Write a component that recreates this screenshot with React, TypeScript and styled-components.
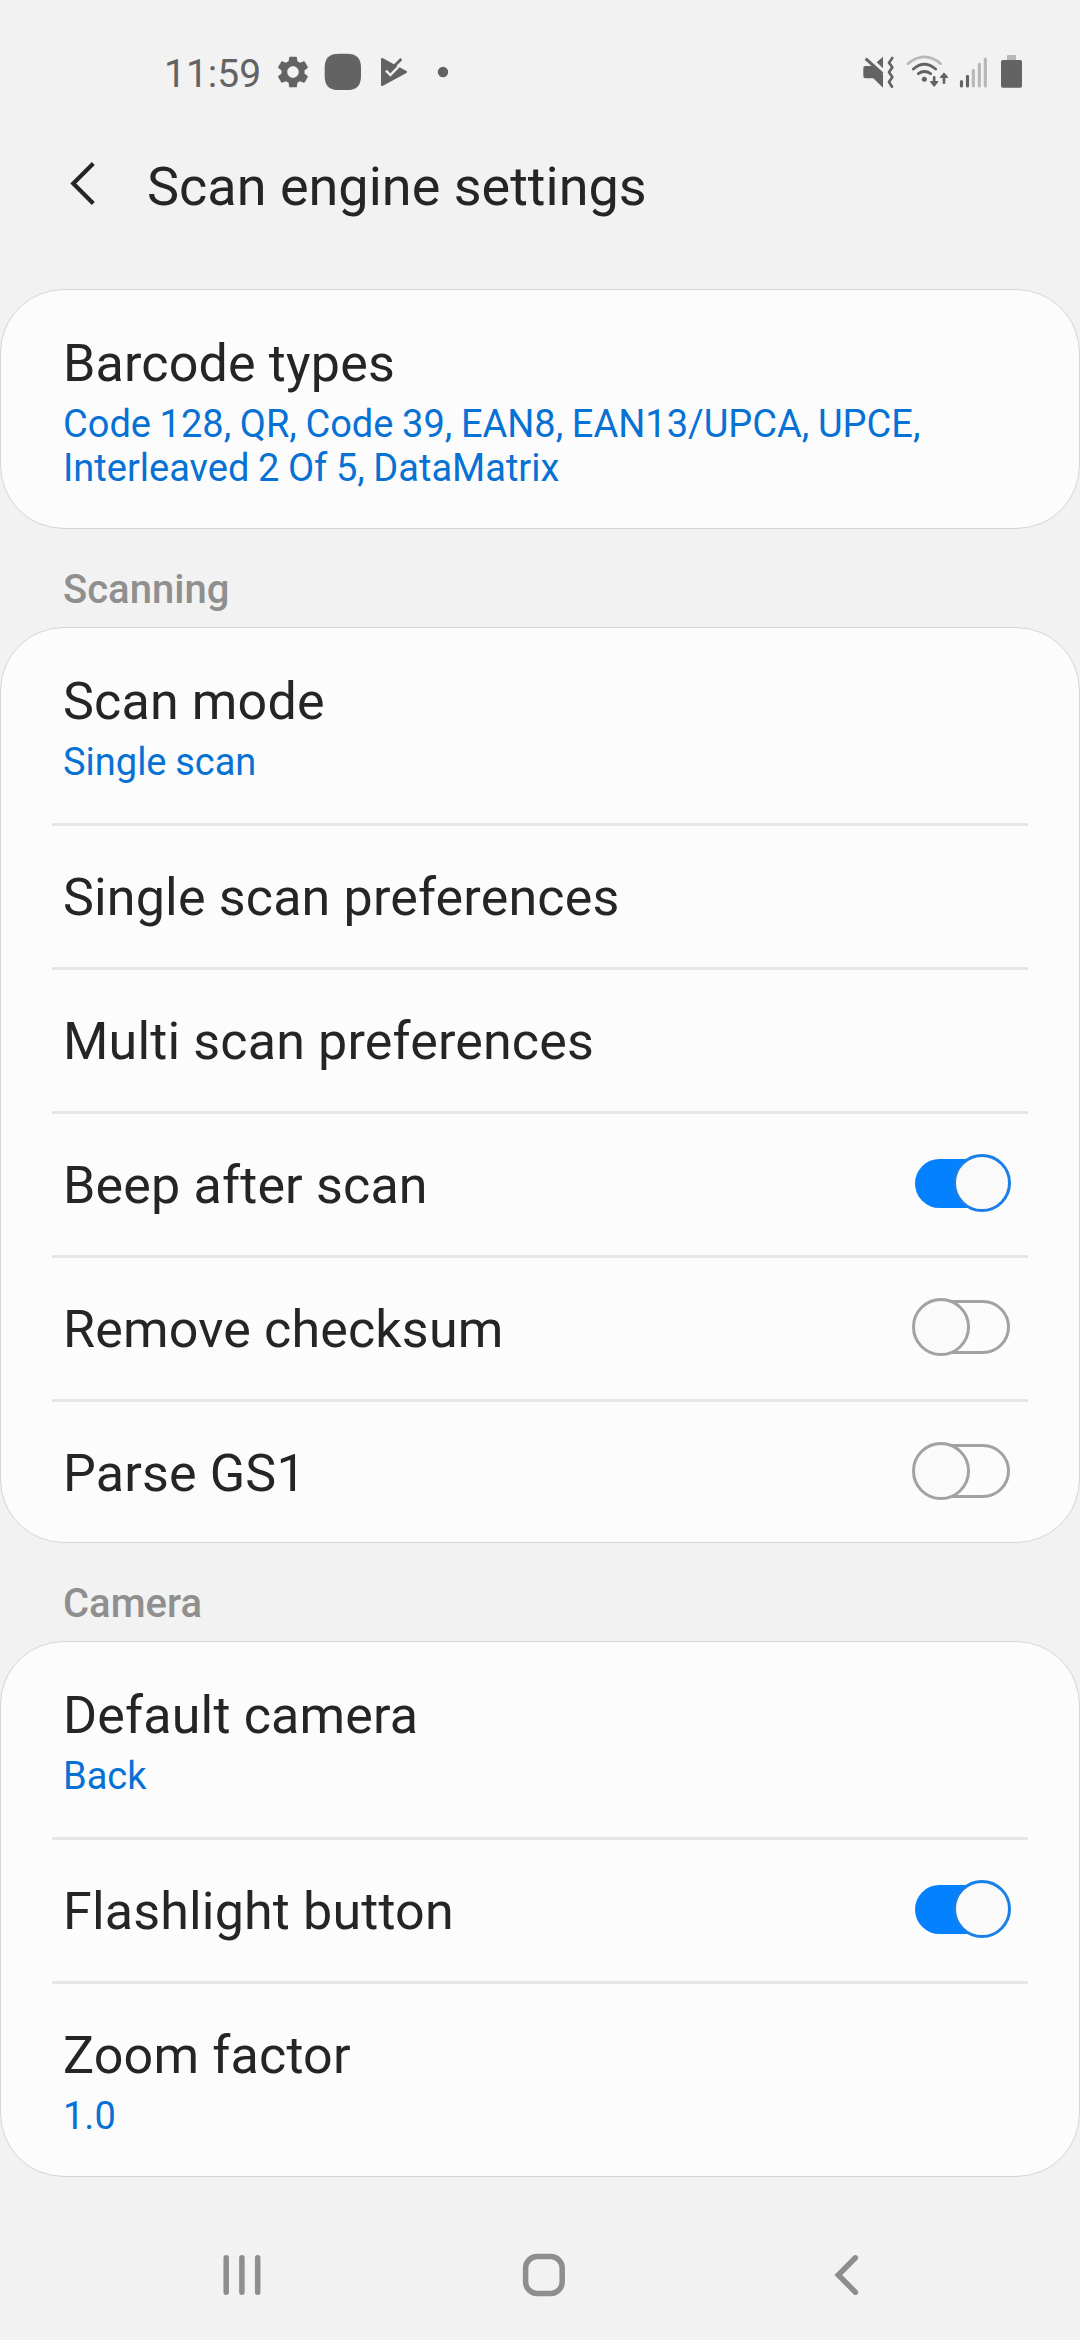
import React from "react";
import styled, { createGlobalStyle } from "styled-components";

const BACKGROUND = "#f2f2f2";
const DARK = "#636363";
const FAINT = "#b8b8b8";

const GlobalStyle = createGlobalStyle`
  * { box-sizing: border-box; }
  body {
    margin: 0;
    background: ${BACKGROUND};
    font-family: Roboto, "Noto Sans", sans-serif;
  }
`;

const Screen = styled.div`
  display: flex;
  flex-direction: column;
  width: 1080px;
  height: 2340px;
  background: ${BACKGROUND};
  overflow: hidden;
`;

const StatusBar = styled.header`
  display: flex;
  justify-content: space-between;
  align-items: center;
  height: 144px;
  padding: 0 55px 0 164px;
`;

const StatusGroup = styled.div`
  display: flex;
  align-items: center;
`;

const Clock = styled.span`
  width: 107px;
  padding-top: 4px;
  font-size: 39px;
  line-height: 46px;
  color: ${DARK};
`;

const AppBar = styled.div`
  display: flex;
  align-items: flex-start;
  height: 145px;
  padding: 11px 0 0 64px;
`;

const BackIcon = styled.svg`
  width: 40px;
  height: 56px;
  flex: none;
`;

const Title = styled.h1`
  margin: 0 0 0 43px;
  font-size: 54px;
  font-weight: 400;
  line-height: 64px;
  color: #252525;
`;

const Card = styled.section`
  padding-top: 2px;
  border: 1px solid #d5d5d5;
  border-radius: 64px;
  background: #fcfcfc;
`;

const SectionHeader = styled.h2`
  height: 98px;
  margin: 0;
  padding: 37px 63px 0;
  font-size: 40px;
  font-weight: 500;
  line-height: 47px;
  color: #8f8f8f;
`;

const Row = styled.div<{ $last?: boolean }>`
  display: flex;
  justify-content: space-between;
  align-items: center;
  margin: 0 51px;
  padding: 41px 17px ${(p) => (p.$last ? 39 : 40)}px 11px;
  border-bottom: ${(p) => (p.$last ? "none" : "3px solid #e6e6e6")};
`;

const RowText = styled.div`
  display: flex;
  flex-direction: column;
`;

const Label = styled.div`
  margin-bottom: -1px;
  font-size: 52px;
  line-height: 61px;
  letter-spacing: 0.17px;
  color: #252525;
`;

const Summary = styled.div`
  width: 900px;
  margin: 9px 0 -1px;
  font-size: 38px;
  line-height: 44px;
  word-spacing: -0.8px;
  color: #0771d4;
`;

const SwitchButton = styled.button<{ $on: boolean }>`
  position: relative;
  display: flex;
  align-items: center;
  justify-content: flex-end;
  width: 99px;
  height: 58px;
  margin: -4px 0 0;
  padding: 0 ${(p) => (p.$on ? 3 : 1)}px 0 0;
  border: 0;
  background: none;
`;

const Track = styled.span<{ $on: boolean }>`
  width: ${(p) => (p.$on ? 93 : 92)}px;
  height: ${(p) => (p.$on ? 49 : 54)}px;
  border: ${(p) => (p.$on ? "none" : "3px solid #a2a2a2")};
  border-radius: 27px;
  background: ${(p) => (p.$on ? "#0381fe" : "transparent")};
`;

const Thumb = styled.span<{ $on: boolean }>`
  position: absolute;
  top: 0;
  left: ${(p) => (p.$on ? 41 : 0)}px;
  width: 58px;
  height: 58px;
  border: 3px solid ${(p) => (p.$on ? "#1a80e8" : "#a2a2a2")};
  border-radius: 50%;
  background: #fafafa;
`;

const NavBar = styled.nav`
  display: flex;
  justify-content: space-between;
  align-items: center;
  flex: 1;
  padding: 33px 217px 0 219px;
`;

const NavIcon = styled.svg`
  width: 48px;
  height: 48px;
  fill: none;
  stroke: #8e8e8e;
  stroke-width: 5.5px;
  stroke-linecap: round;
`;

function NotificationIcons() {
  return (
    <svg width="184" height="40" viewBox="363 36 552 120" fill={DARK}>
      {/* settings gear */}
      <g transform="translate(371.4 38.4) scale(4.8)">
        <path d="M19.14 12.94c.04-.3.06-.61.06-.94 0-.32-.02-.64-.07-.94l2.03-1.58c.18-.14.23-.41.12-.61l-1.92-3.32c-.12-.22-.37-.29-.59-.22l-2.39.96c-.5-.38-1.03-.7-1.62-.94l-.36-2.54c-.04-.24-.24-.41-.48-.41h-3.84c-.24 0-.43.17-.47.41l-.36 2.54c-.59.24-1.13.57-1.62.94l-2.39-.96c-.22-.08-.47 0-.59.22L2.74 8.87c-.12.21-.08.47.12.61l2.03 1.58c-.05.3-.09.63-.09.94s.02.64.07.94l-2.03 1.58c-.18.14-.23.41-.12.61l1.92 3.32c.12.22.37.29.59.22l2.39-.96c.5.38 1.03.7 1.62.94l.36 2.54c.05.24.24.41.48.41h3.84c.24 0 .44-.17.47-.41l.36-2.54c.59-.24 1.13-.56 1.62-.94l2.39.96c.22.08.47 0 .59-.22l1.92-3.32c.12-.22.07-.47-.12-.61l-2.01-1.58zM12 15.6c-1.98 0-3.6-1.62-3.6-3.6s1.62-3.6 3.6-3.6 3.6 1.62 3.6 3.6-1.62 3.6-3.6 3.6z" />
      </g>
      {/* rounded app badge */}
      <path d="M567 41H590C620 41 633 54 633 84V107C633 137 620 150 590 150H567C537 150 524 137 524 107V84C524 54 537 41 567 41Z" />
      {/* play triangle with a check */}
      <path d="M696 57L768 96L696 135Z" stroke={DARK} strokeWidth="6" strokeLinejoin="round" />
      <path d="M708 92L721 105L758 67" fill="none" stroke={BACKGROUND} strokeWidth="7" />
      <path d="M720 91L754 57" fill="none" stroke={DARK} strokeWidth="8.5" />
      <circle cx="879" cy="96" r="15.5" />
    </svg>
  );
}

function SystemIcons() {
  return (
    <svg
      width="165"
      height="40"
      viewBox="60 36 495 120"
      fill="none"
      stroke={DARK}
      strokeLinecap="round"
      strokeLinejoin="round"
    >
      {/* muted speaker with vibration */}
      <path
        stroke="none"
        fill={DARK}
        d="M76 78H96L129 101V143L100 115H76Q70 115 70 109V84Q70 78 76 78ZM110 67L129 50V85Z"
      />
      <path strokeWidth="9" strokeLinecap="butt" d="M77 56L127 101" />
      <path strokeWidth="8" d="M157 54L147 68L157 82L147 97L157 111L147 126L156 140" />
      {/* wifi */}
      <path stroke={FAINT} strokeWidth="8" d="M204 71Q253 30 302 71" />
      <path strokeWidth="8.5" d="M220 87Q253 58 287 87" />
      <path strokeWidth="8.5" d="M235 101Q253 88 272 101" />
      <circle cx="253" cy="118" r="7.5" fill={DARK} stroke="none" />
      <path strokeWidth="8" d="M282.5 112V128M312 110V128" />
      <path fill={DARK} strokeWidth="4" d="M272 125H293L282.5 138ZM301.5 112H322.5L312 100Z" />
      {/* signal strength */}
      <g strokeWidth="9.5">
        <path d="M364.5 125V138M382.5 109V138" />
        <path stroke={FAINT} d="M400 91V138M418 73V138M436 57V138" />
      </g>
      {/* battery */}
      <rect x="501" y="45" width="27" height="16" rx="3" fill={FAINT} stroke="none" />
      <rect x="483" y="60" width="63" height="83" rx="5" fill={DARK} stroke="none" />
    </svg>
  );
}

function Switch({ on }: { on: boolean }) {
  return (
    <SwitchButton $on={on} role="switch" aria-checked={on}>
      <Track $on={on} />
      <Thumb $on={on} />
    </SwitchButton>
  );
}

interface Setting {
  label: string;
  summary?: string;
  on?: boolean;
}

function SettingsCard({ items }: { items: Setting[] }) {
  return (
    <Card>
      {items.map(({ label, summary, on }, i) => (
        <Row key={label} $last={i === items.length - 1}>
          <RowText>
            <Label>{label}</Label>
            {summary && <Summary>{summary}</Summary>}
          </RowText>
          {on !== undefined && <Switch on={on} />}
        </Row>
      ))}
    </Card>
  );
}

const barcode: Setting[] = [
  {
    label: "Barcode types",
    summary: "Code 128, QR, Code 39, EAN8, EAN13/UPCA, UPCE, Interleaved 2 Of 5, DataMatrix",
  },
];

const scanning: Setting[] = [
  { label: "Scan mode", summary: "Single scan" },
  { label: "Single scan preferences" },
  { label: "Multi scan preferences" },
  { label: "Beep after scan", on: true },
  { label: "Remove checksum", on: false },
  { label: "Parse GS1", on: false },
];

const camera: Setting[] = [
  { label: "Default camera", summary: "Back" },
  { label: "Flashlight button", on: true },
  { label: "Zoom factor", summary: "1.0" },
];

export default function App() {
  return (
    <>
      <GlobalStyle />
      <Screen>
        <StatusBar>
          <StatusGroup>
            <Clock>11:59</Clock>
            <NotificationIcons />
          </StatusGroup>
          <SystemIcons />
        </StatusBar>
        <AppBar>
          <BackIcon viewBox="0 0 40 56" fill="none" stroke="#252525" strokeWidth="4.2">
            <path d="M29.3 8.6L9.3 28.5L29.3 48.4" />
          </BackIcon>
          <Title>Scan engine settings</Title>
        </AppBar>
        <SettingsCard items={barcode} />
        <SectionHeader>Scanning</SectionHeader>
        <SettingsCard items={scanning} />
        <SectionHeader>Camera</SectionHeader>
        <SettingsCard items={camera} />
        <NavBar>
          <NavIcon viewBox="0 0 48 48">
            <path d="M7.2 6.8V41.2M22.9 6.8V41.2M38.7 6.8V41.2" />
          </NavIcon>
          <NavIcon viewBox="0 0 48 48">
            <rect x="8.6" y="5.6" width="36.6" height="36.8" rx="11.5" />
          </NavIcon>
          <NavIcon viewBox="0 0 48 48">
            <path d="M40.4 6.8L23.3 24L40.4 41.2" />
          </NavIcon>
        </NavBar>
      </Screen>
    </>
  );
}
